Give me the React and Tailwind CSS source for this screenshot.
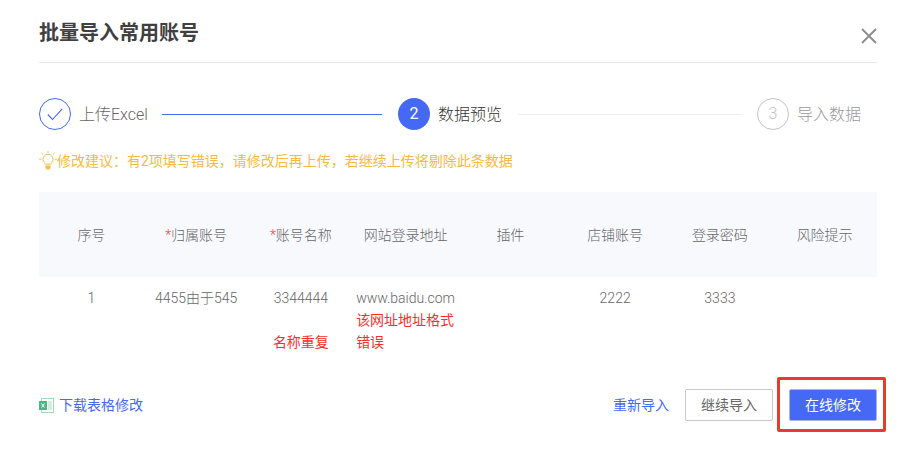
function Step({ circle, label, labelClass }) {
  return (
    <div className="flex items-center shrink-0">
      {circle}
      <span className={`ml-2 pt-px text-base leading-[32px] whitespace-nowrap ${labelClass}`}>{label}</span>
    </div>
  );
}

function Bulb() {
  return (
    <svg width="18" height="20" viewBox="0 0 18 20" fill="none" stroke="#f8bf50" strokeWidth="1" className="shrink-0">
      <path d="M6.2 13.2c0-1.4-2.2-2.2-2.2-5a5 5 0 0 1 10 0c0 2.8-2.2 3.600-2.200 5z" />
      <path d="M6.500 14.500h5v2.500l-1 1.500h-3l-1-1.500z" fill="#f8bf50" stroke="none" />
      <path d="M9 0.500v1.500M2.800 2.200l1.100 1.100M15.200 2.200l-1.100 1.100M0.500 8.200h1.500M16 8.200h1.500" strokeLinecap="round" />
    </svg>
  );
}

function ExcelIcon() {
  return (
    <svg width="15" height="15" viewBox="0 0 15 15" className="shrink-0">
      <rect x="2.500" y="0.500" width="12" height="14" fill="#fff" stroke="#9ddcc0" />
      <rect x="9" y="3" width="4" height="9" fill="#d3eee1" />
      <rect x="0" y="3" width="8" height="9" fill="#4fb584" />
      <path d="M2.500 5.500l3 4M5.500 5.500l-3 4" stroke="#fff" strokeWidth="1" />
    </svg>
  );
}

const heads = [
  ["序号", false],
  ["归属账号", true],
  ["账号名称", true],
  ["网站登录地址", false],
  ["插件", false],
  ["店铺账号", false],
  ["登录密码", false],
  ["风险提示", false],
];

export default function App() {
  return (
    <div className="relative w-[915px] h-[452px] overflow-hidden bg-white font-['Roboto','Noto_Sans_CJK_SC',sans-serif] text-sm font-light text-[#666]">
      <div className="pr-[38px] pl-[39px] pt-[21px]">
        <header className="flex items-center justify-between h-[41px] pb-[17px]">
          <h1 className="text-xl leading-6 font-bold text-[#404040]">批量导入常用账号</h1>
          <svg width="16" height="16" viewBox="0 0 16 16" stroke="#8c8c8c" strokeWidth="1.800" className="mt-[6px]">
            <path d="M1 1l14 14M15 1L1 15" />
          </svg>
        </header>
        <div className="h-px bg-[#e8e8e8]" />

        <div className="flex items-center mt-[35px] h-8 pr-4">
          <Step
            label="上传Excel"
            labelClass="text-[#666] w-[67px]"
            circle={
              <span className="flex items-center justify-center w-8 h-8 rounded-full border border-[#4569f5]">
                <svg width="16" height="13" viewBox="0 0 16 13" fill="none" stroke="#4569f5" strokeWidth="1.100">
                  <path d="M0.800 6.500l4.700 5L15.200 0.800" />
                </svg>
              </span>
            }
          />
          <div className="w-[220px] h-px bg-[#4569f5] mx-4" />
          <Step
            label="数据预览"
            labelClass="text-[#333]"
            circle={
              <span className="flex items-center justify-center w-8 h-8 rounded-full bg-[#4569f5] text-white text-base font-normal">2</span>
            }
          />
          <div className="flex-1 h-px bg-[#eeeeee] mx-4" />
          <Step
            label="导入数据"
            labelClass="text-[#999]"
            circle={
              <span className="flex items-center justify-center w-8 h-8 rounded-full border border-[#c4c4c4] text-[#c4c4c4] text-base">3</span>
            }
          />
        </div>

        <div className="flex items-center mt-[20px] h-[22px] text-[#f8b93f] leading-[22px] font-normal">
          <Bulb />
          <span>修改建议：有2项填写错误，请修改后再上传，若继续上传将剔除此条数据</span>
        </div>

        <div className="mt-[20px]">
          <div className="grid grid-cols-8 items-center h-[85px] bg-[#f8f9fd]">
            {heads.map(([t, req]) => (
              <div key={t} className="text-center leading-[22px] text-[#666]">
                {req && <span className="text-[#f5413b]">*</span>}
                {t}
              </div>
            ))}
          </div>
          <div className="grid grid-cols-8 pt-[10px] leading-[22px] text-center text-[#666] h-[89px]">
            <div>1</div>
            <div>4455由于545</div>
            <div>
              <div>3344444</div>
              <div className="mt-[22px] text-[#f5302a] font-normal">名称重复</div>
            </div>
            <div className="flex justify-center">
              <div className="w-[99px] text-left">
                <div>www.baidu.com</div>
                <div className="text-[#f5302a] font-normal">该网址地址格式错误</div>
              </div>
            </div>
            <div />
            <div>2222</div>
            <div>3333</div>
            <div />
          </div>
        </div>

        <footer className="flex items-center justify-between mt-[23px] h-8 font-normal">
          <a className="flex items-center gap-[5px] text-[#4569f5]">
            <ExcelIcon />
            下载表格修改
          </a>
          <div className="flex items-center">
            <a className="text-[#4569f5] mr-4">重新导入</a>
            <button className="w-[88px] h-8 rounded-[2px] border border-[#c8c8c8] bg-white text-[#666] mr-4">继续导入</button>
            <button className="w-[88px] h-8 rounded-[2px] border border-[#a9b4e0] bg-[#4569f5] text-white">在线修改</button>
          </div>
        </footer>
      </div>
      <div className="absolute left-[777px] top-[377px] w-[109px] h-[55px] border-[3px] border-[#e83a2e] rounded-[2px] pointer-events-none" />
    </div>
  );
}
